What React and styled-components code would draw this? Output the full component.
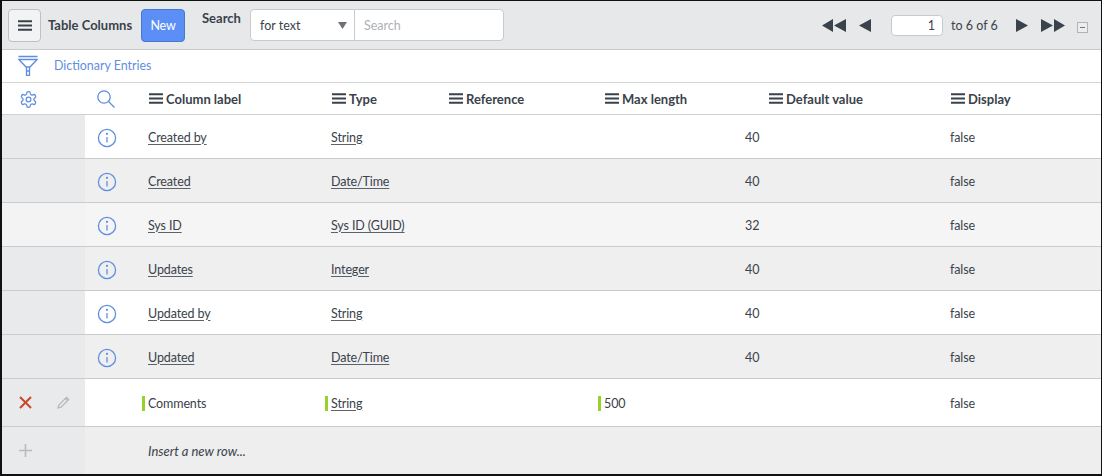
import React from "react";
import styled, { createGlobalStyle } from "styled-components";

const Global = createGlobalStyle`
  html, body { margin: 0; padding: 0; background: #fff; }
  body { font-family: "Lato", "Liberation Sans", sans-serif; color: #3a424b; }
  * { box-sizing: border-box; }
`;

const Frame = styled.div`
  width: 1102px; height: 476px; border: 1px solid #111; border-width: 1px 1px 2px 2px;
  display: flex; flex-direction: column; overflow: hidden; background: #fff;
`;
const Toolbar = styled.div`
  height: 49px; background: #e6e8ea; border-bottom: 1px solid #c8cacc; display: flex; align-items: center; padding: 0 0 0 6px; flex: none;
`;
const MenuBtn = styled.button`
  width: 33px; height: 33px; border: 1px solid #bdc0c4; border-radius: 4px; background: #f2f3f3;
  display: flex; align-items: center; justify-content: center; padding: 0;
`;
const Title = styled.span`font-size: 13px; font-weight: 700; margin-left: 7px; width: 86px; white-space: nowrap;`;
const NewBtn = styled.button`
  width: 44px; height: 33px; margin-left: 7px; border: 1px solid #4a78d0; border-radius: 4px; background: #5c8ff6; color: #fff;
  font: 400 12.5px "Lato", sans-serif; letter-spacing: -0.2px; padding: 0;
`;
const SearchLabel = styled.span`font-size: 13px; font-weight: 700; margin: 0 0 14px 17px; width: 48px;`;
const SearchGroup = styled.div`
  width: 254px; height: 32px; display: flex; border: 1px solid #c8cacc; border-radius: 4px; background: #fff; font-size: 12.5px;
`;
const SelectBox = styled.div`
  width: 104px; border-right: 1px solid #c8cacc; display: flex; align-items: center; justify-content: space-between; padding: 0 7px 0 9px;
`;
const Placeholder = styled.div`flex: 1; display: flex; align-items: center; padding-left: 9px; color: #aeb2b6;`;
const Pager = styled.div`margin-left: auto; display: flex; align-items: center; padding-right: 13px;`;
const PageInput = styled.div`
  width: 52px; height: 21px; margin: 0 8px 0 20px; background: #fff; border: 1px solid #c8cacc; border-radius: 4px;
  font-size: 12.5px; text-align: right; padding-right: 7px; line-height: 19px;
`;
const PageText = styled.span`font-size: 12.5px; width: 65px; white-space: nowrap;`;
const IconBtn = styled.span`display: inline-flex; margin-left: ${p => p.$ml || 0}px;`;
const Collapse = styled.span`
  width: 11px; height: 11px; border: 1px solid #b0b3b7; margin: 4px 0 0 12px; display: flex; align-items: center; justify-content: center; background: #eceded;
  &::after { content: ""; width: 5px; height: 1px; background: #777; }
`;
const Breadcrumb = styled.div`
  height: 33px; flex: none; display: flex; align-items: center; padding: 0 0 2px 16px; border-bottom: 1px solid #d4d6d8; color: #5f8ee0; font-size: 12.4px; gap: 16px;
`;
const grid = `display: grid; grid-template-columns: 83px 63px 183px 117px 156px 164px 182px 1fr;`;
const HeadRow = styled.div`
  ${grid} height: 32px; flex: none; align-items: center; border-bottom: 1px solid #cfd1d3; font-size: 13px; font-weight: 700;
`;
const HeadIcon = styled.div`display: flex; padding: 1px 0 0 ${p => p.$pad}px;`;
const HeadCell = styled.div`display: flex; align-items: center; gap: 3px; white-space: nowrap; padding-left: 1px;`;
const Row = styled.div`
  ${grid} height: 44px; flex: none; align-items: stretch; font-size: 12.5px; letter-spacing: -0.12px;
  background: ${p => p.$bg}; border-bottom: 1px solid #c9cbcd;
`;
const Gutter = styled.div`background: ${p => p.$bg || "#e9eaeb"}; display: flex; align-items: center; padding-left: 17px; gap: 25px;`;
const InfoCell = styled.div`display: flex; align-items: center; padding: 2px 0 0 12px;`;
const Cell = styled.div`display: flex; align-items: center; white-space: nowrap; padding-top: 1px; margin-left: ${p => p.$shift || 0}px;`;
const Link = styled.span`text-decoration: underline; text-underline-offset: 2px; text-decoration-color: #5b626a;`;
const Marker = styled.span`width: 3px; height: 15px; background: #97d22c; margin-right: 3px; margin-left: -6px;`;
const EditRow = styled(Row)`height: 48px; background: #fff;`;
const InsertRow = styled(Row)`height: 47px; background: #eeeeee; border-bottom: none;`;
const Italic = styled.span`font-style: italic; font-size: 13px; letter-spacing: 0;`;

const Bars = ({ w = 14, s = "#3a424b" }) => (
  <svg width={w} height="11" viewBox="0 0 14 11"><path d="M0 1.2h14M0 5.5h14M0 9.8h14" stroke={s} strokeWidth="2" /></svg>
);
const Info = () => (
  <svg width="20" height="20" viewBox="0 0 20 20" fill="none" stroke="#5f8ee0" strokeWidth="1.3">
    <circle cx="10" cy="10" r="8.6" /><path d="M10 9v5.5" /><circle cx="10" cy="5.8" r=".5" fill="#5f8ee0" />
  </svg>
);
const Tri = ({ dir = 1 }) => (
  <svg width="12" height="13" viewBox="0 0 12 13"><path d={dir > 0 ? "M0 0l12 6.5L0 13z" : "M12 0L0 6.5 12 13z"} fill="#3a424b" /></svg>
);
const Double = ({ dir = 1 }) => (
  <svg width="24" height="13" viewBox="0 0 24 13"><path d={dir > 0 ? "M0 0l12 6.5L0 13zM13 0l11 6.5L13 13z" : "M11 0L0 6.5 11 13zM24 0L12 6.5 24 13z"} fill="#3a424b" /></svg>
);

const rows = [
  ["Created by", "String", "40", "#fff"],
  ["Created", "Date/Time", "40", "#efefef"],
  ["Sys ID", "Sys ID (GUID)", "32", "#f5f5f5", "#f3f3f3"],
  ["Updates", "Integer", "40", "#efefef"],
  ["Updated by", "String", "40", "#fff"],
  ["Updated", "Date/Time", "40", "#efefef"],
];
const heads = ["Column label", "Type", "Reference", "Max length", "Default value", "Display"];

export default function App() {
  return (
    <Frame>
      <Global />
      <Toolbar>
        <MenuBtn><Bars /></MenuBtn>
        <Title>Table Columns</Title>
        <NewBtn>New</NewBtn>
        <SearchLabel>Search</SearchLabel>
        <SearchGroup>
          <SelectBox>for text<svg width="9" height="7" viewBox="0 0 9 7"><path d="M0 0h9L4.500 7z" fill="#6d7278" /></svg></SelectBox>
          <Placeholder>Search</Placeholder>
        </SearchGroup>
        <Pager>
          <Double dir={-1} />
          <IconBtn $ml={13}><Tri dir={-1} /></IconBtn>
          <PageInput>1</PageInput>
          <PageText>to 6 of 6</PageText>
          <IconBtn><Tri /></IconBtn>
          <IconBtn $ml={13}><Double /></IconBtn>
          <Collapse />
        </Pager>
      </Toolbar>
      <Breadcrumb>
        <svg width="20" height="21" viewBox="0 0 20 21" fill="none" stroke="#5f8ee0" strokeWidth="1.3">
          <path d="M0.500 1.500h19M1 4.500h18L12 12H8zM8.500 12H11.500v8.500H8.500zM8.500 16h3" />
        </svg>
        Dictionary Entries
      </Breadcrumb>
      <HeadRow>
        <HeadIcon $pad={17}>
          <svg width="19" height="19" viewBox="0 0 24 24" fill="none" stroke="#5f8ee0" strokeWidth="1.6" strokeLinejoin="round">
            <path d="M12.22 2h-.44a2 2 0 0 0-2 2v.18a2 2 0 0 1-1 1.73l-.43.25a2 2 0 0 1-2 0l-.15-.08a2 2 0 0 0-2.73.73l-.22.38a2 2 0 0 0 .73 2.73l.15.1a2 2 0 0 1 1 1.72v.51a2 2 0 0 1-1 1.74l-.15.09a2 2 0 0 0-.73 2.73l.22.38a2 2 0 0 0 2.73.73l.15-.08a2 2 0 0 1 2 0l.43.25a2 2 0 0 1 1 1.73V20a2 2 0 0 0 2 2h.44a2 2 0 0 0 2-2v-.18a2 2 0 0 1 1-1.73l.43-.25a2 2 0 0 1 2 0l.15.08a2 2 0 0 0 2.73-.73l.22-.39a2 2 0 0 0-.73-2.73l-.15-.08a2 2 0 0 1-1-1.74v-.5a2 2 0 0 1 1-1.74l.15-.09a2 2 0 0 0 .73-2.73l-.22-.38a2 2 0 0 0-2.73-.73l-.15.08a2 2 0 0 1-2 0l-.43-.25a2 2 0 0 1-1-1.73V4a2 2 0 0 0-2-2z" />
            <circle cx="12" cy="12" r="3" />
          </svg>
        </HeadIcon>
        <HeadIcon $pad={12}>
          <svg width="18" height="18" viewBox="0 0 18 18" fill="none" stroke="#5f8ee0" strokeWidth="1.3">
            <circle cx="7" cy="7" r="6.200" /><path d="M11.500 11.500l6 6" />
          </svg>
        </HeadIcon>
        {heads.map(h => (
          <HeadCell key={h}><Bars />{h}</HeadCell>
        ))}
      </HeadRow>
      {rows.map(([label, type, len, bg, gutter]) => (
        <Row key={label} $bg={bg}>
          <Gutter $bg={gutter} />
          <InfoCell><Info /></InfoCell>
          <Cell><Link>{label}</Link></Cell>
          <Cell><Link>{type}</Link></Cell>
          <Cell />
          <Cell />
          <Cell $shift={-23}>{len}</Cell>
          <Cell>false</Cell>
        </Row>
      ))}
      <EditRow $bg="#fff">
        <Gutter>
          <svg width="13" height="13" viewBox="0 0 13 13"><path d="M1 1l11 11M12 1L1 12" stroke="#c9472b" strokeWidth="2" /></svg>
          <svg width="13" height="13" viewBox="0 0 13 13" fill="none" stroke="#b5b7b9" strokeWidth="1.200"><path d="M1 12l.8-3L9.500 1.300l2.200 2.200L4 11.200zM8.300 2.500l2.200 2.200" /></svg>
        </Gutter>
        <Cell />
        <Cell><Marker />Comments</Cell>
        <Cell><Marker /><Link>String</Link></Cell>
        <Cell />
        <Cell><Marker />500</Cell>
        <Cell />
        <Cell>false</Cell>
      </EditRow>
      <InsertRow $bg="#eee">
        <Gutter>
          <svg width="13" height="13" viewBox="0 0 13 13"><path d="M6.500 0v13M0 6.500h13" stroke="#b9bbbd" strokeWidth="1.600" /></svg>
        </Gutter>
        <Cell />
        <Cell><Italic>Insert a new row...</Italic></Cell>
      </InsertRow>
    </Frame>
  );
}
